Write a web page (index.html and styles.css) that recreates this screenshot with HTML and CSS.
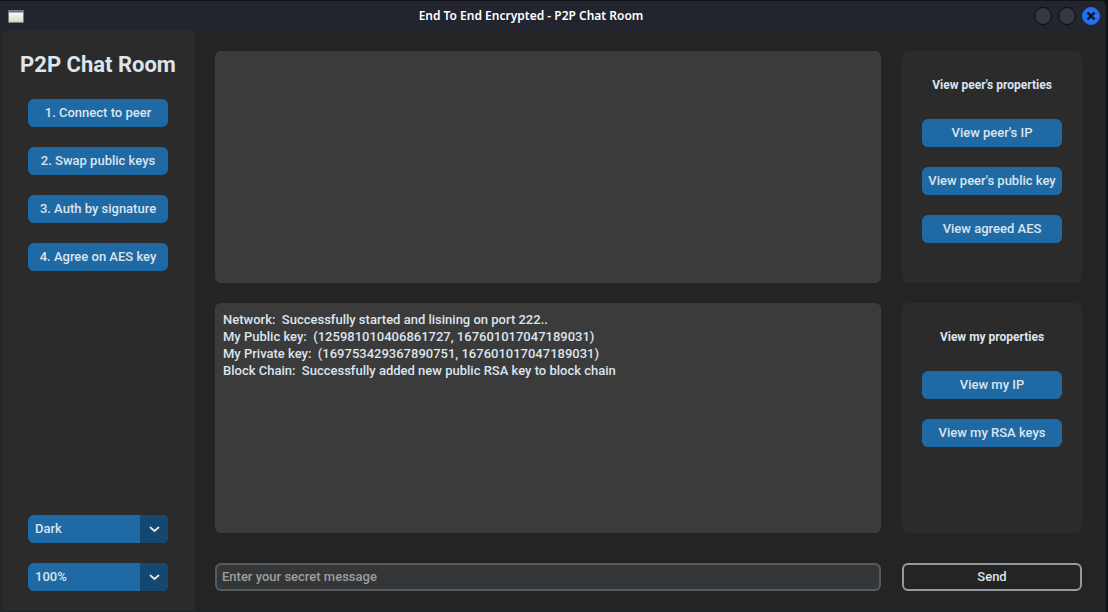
FILE: index.html
```html
<!DOCTYPE html>
<html lang="en">
<head>
<meta charset="utf-8">
<title>End To End Encrypted - P2P Chat Room</title>
<link rel="stylesheet" href="styles.css">
</head>
<body>
<div class="window">
  <header class="titlebar">
    <svg class="app-icon" width="16" height="14" viewBox="0 0 16 14" aria-hidden="true">
      <defs><linearGradient id="paper" x1="0" y1="0" x2="0" y2="1"><stop offset="0" stop-color="#fff"/><stop offset="1" stop-color="#d5d8d0"/></linearGradient></defs>
      <rect y="1" width="16" height="13" rx="1" fill="#777b78"/>
      <rect x="1" y="2" width="14" height="11" fill="url(#paper)"/>
      <rect x="1" y="2" width="14" height="1" fill="#4c70a8"/>
      <rect x="1" y="3" width="14" height="1" fill="#9db5d8"/>
    </svg>
    <h1 class="window-title">End To End Encrypted - P2P Chat Room</h1>
    <div class="window-controls">
      <button class="control" type="button" aria-label="Minimize"></button>
      <button class="control" type="button" aria-label="Maximize"></button>
      <button class="control control-close" type="button" aria-label="Close">
        <svg width="10" height="10" viewBox="0 0 10 10" aria-hidden="true"><path d="M1.5 1.5L8.5 8.5M8.5 1.5L1.5 8.5" stroke="#101218" stroke-width="2.4"/></svg>
      </button>
    </div>
  </header>
  <div class="content">
    <aside class="sidebar">
      <h2 class="brand">P2P Chat Room</h2>
      <nav class="button-stack">
        <button class="button" type="button">1. Connect to peer</button>
        <button class="button" type="button">2. Swap public keys</button>
        <button class="button" type="button">3. Auth by signature</button>
        <button class="button" type="button">4. Agree on AES key</button>
      </nav>
      <div class="button-stack settings">
        <div class="picker">
          <select class="picker-select" aria-label="Appearance mode"><option>Dark</option><option>Light</option><option>System</option></select>
          <span class="picker-arrow"><svg width="10" height="6" viewBox="0 0 10 6" aria-hidden="true"><path d="M1.5 1.5L5.5 5L9.5 1.5"/></svg></span>
        </div>
        <div class="picker">
          <select class="picker-select" aria-label="UI scaling"><option>100%</option><option>110%</option><option>120%</option></select>
          <span class="picker-arrow"><svg width="10" height="6" viewBox="0 0 10 6" aria-hidden="true"><path d="M1.5 1.5L5.5 5L9.5 1.5"/></svg></span>
        </div>
      </div>
    </aside>
    <main class="workspace">
      <textarea class="textbox" aria-label="Chat" readonly></textarea>
      <section class="panel">
        <h3 class="panel-title">View peer's properties</h3>
        <div class="button-stack">
          <button class="button" type="button">View peer's IP</button>
          <button class="button" type="button">View peer's public key</button>
          <button class="button" type="button">View agreed AES</button>
        </div>
      </section>
      <textarea class="textbox" aria-label="Log" readonly>Network:  Successfully started and lisining on port 222..
My Public key:  (125981010406861727, 167601017047189031)
My Private key:  (169753429367890751, 167601017047189031)
Block Chain:  Successfully added new public RSA key to block chain</textarea>
      <section class="panel">
        <h3 class="panel-title">View my properties</h3>
        <div class="button-stack">
          <button class="button" type="button">View my IP</button>
          <button class="button" type="button">View my RSA keys</button>
        </div>
      </section>
      <input class="message" type="text" placeholder="Enter your secret message" aria-label="Secret message">
      <button class="send" type="button">Send</button>
    </main>
  </div>
</div>
</body>
</html>
```
FILE: styles.css
```css
* { box-sizing: border-box; }

body {
  margin: 0;
  background: #101218;
  color: #dce4ee;
  font: 500 13px/17px Roboto, sans-serif;
}

button, input, select, textarea {
  margin: 0;
  color: inherit;
  font: inherit;
}

.window {
  display: flex;
  flex-direction: column;
  min-height: 100vh;
  margin-right: 1px;
  padding: 0 5px 1px 2px;
  border-top: 1px solid #101218;
  border-right: 1px solid #101218;
  border-top-right-radius: 6px;
  background: #23252e;
}

.titlebar {
  display: flex;
  align-items: center;
  height: 30px;
  padding: 0 1px 0 6px;
}

.app-icon { display: block; }

.window-title {
  flex: 1;
  margin: 0;
  padding-left: 4px;
  color: #fff;
  font: 600 12px/18px "Noto Sans", sans-serif;
  text-align: center;
}

.window-controls {
  display: flex;
  gap: 6px;
}

.control {
  display: grid;
  place-items: center;
  width: 18px;
  height: 18px;
  padding: 0;
  border: 1px solid #080a0e;
  border-radius: 50%;
  background: #353843;
}

.control-close {
  border-color: #2470f3;
  background: #2470f3;
}

.content {
  display: flex;
  flex: 1;
  background: #242424;
}

.sidebar {
  display: flex;
  flex-direction: column;
  align-items: center;
  width: 192px;
  padding: 20px;
  background: #2b2b2b;
}

.brand {
  margin: 0 0 20px;
  font-size: 22px;
  font-weight: 700;
  line-height: 28px;
  text-align: center;
  white-space: nowrap;
}

.button-stack {
  display: flex;
  flex-direction: column;
  align-items: center;
  gap: 20px;
}

.settings { margin-top: auto; }

.button {
  width: 140px;
  height: 28px;
  padding: 0 0 2px;
  border: 0;
  border-radius: 6px;
  background: #1f6aa5;
  white-space: nowrap;
}

.picker {
  display: grid;
  width: 140px;
  height: 28px;
  grid-template-columns: 1fr 28px;
  overflow: hidden;
  border-radius: 6px;
  background: #1f6aa5;
}

.picker-select {
  grid-area: 1 / 1 / 2 / 3;
  padding: 0 7px 2px;
  border: 0;
  appearance: none;
  background: transparent;
}

.picker-arrow {
  display: grid;
  grid-area: 1 / 2;
  place-items: center;
  background: #144870;
  pointer-events: none;
}

.picker-arrow svg { overflow: visible; }

.picker-arrow path {
  fill: none;
  stroke: #dce4ee;
  stroke-linecap: round;
  stroke-linejoin: round;
  stroke-width: 1.8;
}

.workspace {
  display: grid;
  flex: 1;
  grid-template-columns: 1fr 180px;
  grid-template-rows: 232fr 230fr 38px;
  gap: 20px 21px;
  padding: 20px 19px 20px 21px;
}

.textbox {
  width: 100%;
  height: 100%;
  padding: 8px;
  border: 0;
  border-radius: 6px;
  outline: 0;
  background: #3b3b3b;
  resize: none;
}

.panel {
  padding: 20px;
  border-radius: 6px;
  background: #2b2b2b;
}

.panel-title {
  margin: 0 0 20px;
  font-size: 12px;
  font-weight: 700;
  line-height: 28px;
  text-align: center;
}

.message, .send {
  align-self: end;
  width: 100%;
  height: 28px;
  border: 2px solid #565b5e;
  border-radius: 6px;
}

.message {
  padding: 0 5px 2px;
  background: #343638;
}

.message::placeholder { color: #9e9e9e; opacity: 1; }

.send {
  padding: 0 0 2px;
  border-color: #949a9f;
  background: transparent;
}
```
